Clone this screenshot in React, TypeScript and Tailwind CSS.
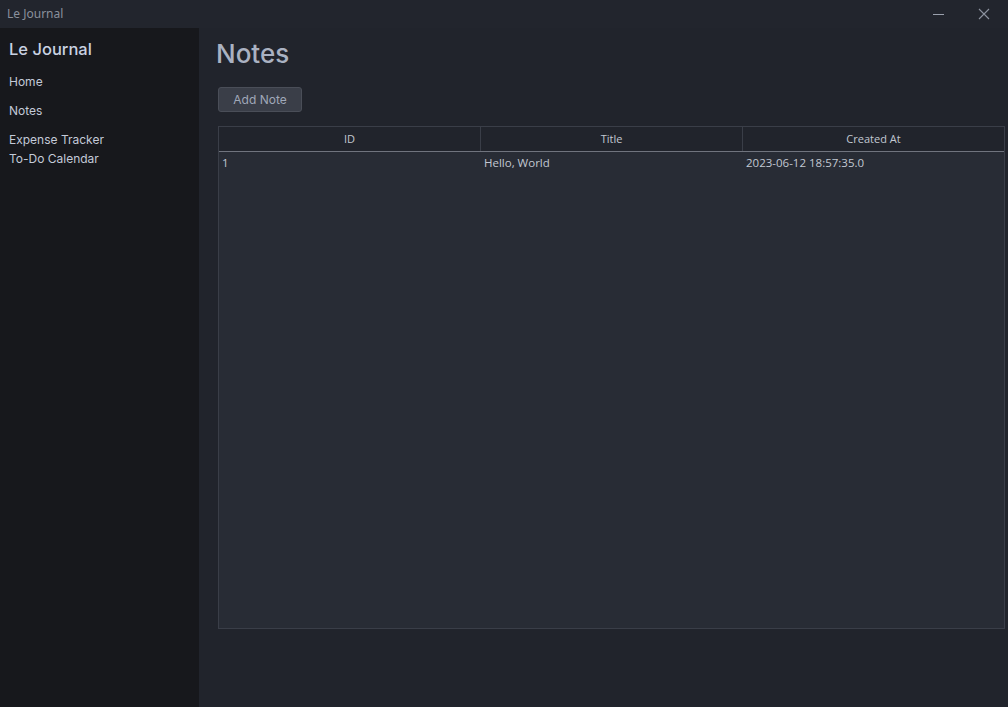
import React from "react";

export default function App() {
  return (
    <div className="w-[1008px] h-[707px] flex flex-col bg-[#21242c] overflow-hidden" style={{ fontFamily: "'Open Sans', 'Noto Sans', sans-serif" }}>
      <div className="h-[28px] flex items-center justify-between bg-[#22252d] shrink-0">
        <span className="pl-[7px] text-[12px] text-[#8a909c]" style={{ fontFamily: "'Noto Sans', sans-serif" }}>Le Journal</span>
        <div className="flex items-center h-full">
          <div className="w-[46px] h-full flex items-center justify-center">
            <div className="w-[11px] h-px bg-[#9aa0ac]" />
          </div>
          <div className="w-[46px] h-full flex items-center justify-center mr-[1px]">
            <svg width="12" height="12" viewBox="0 0 12 12">
              <path d="M1 1 L11 11 M11 1 L1 11" stroke="#8d93a0" strokeWidth="1.1" />
            </svg>
          </div>
        </div>
      </div>
      <div className="flex flex-1 min-h-0">
        <aside className="w-[199px] bg-[#17181c] shrink-0 pl-[9px] pt-[10px]" style={{ fontFamily: "Inter, 'Noto Sans', sans-serif" }}>
          <div className="text-[16.5px] font-medium text-[#c9d2e2] leading-[22px]">Le Journal</div>
          <div className="mt-[12px] text-[12px] text-[#c3cad8] leading-[19px]">Home</div>
          <div className="mt-[10px] text-[12px] text-[#c3cad8] leading-[19px]">Notes</div>
          <div className="mt-[10px] text-[12px] text-[#c3cad8] leading-[19px]">Expense Tracker</div>
          <div className="text-[12px] text-[#c3cad8] leading-[19px]">To-Do Calendar</div>
        </aside>
        <main className="flex-1 pl-[17px] pr-[3px] pt-[10px]">
          <h1 className="text-[26px] font-medium text-[#aab2c2] leading-[32px]" style={{ fontFamily: "Inter, 'Noto Sans', sans-serif" }}>Notes</h1>
          <button className="mt-[17px] ml-[2px] w-[84px] h-[25px] bg-[#3a3e48] border border-[#4a4e58] rounded-[3px] text-[12px] text-[#a0a8b8] flex items-center justify-center" style={{ fontFamily: "Inter, 'Noto Sans', sans-serif" }}>Add Note</button>
          <div className="mt-[14px] ml-[2px] w-[787px] h-[503px] border border-[#3a3e48] bg-[#282c35] flex flex-col text-[11px]">
            <div className="h-[25px] grid grid-cols-[262px_262px_1fr] bg-[#21242c] border-b border-[#70747e] text-[#c2c8d2]">
              <div className="flex items-center justify-center border-r border-[#3a3e48] pt-[1px]">ID</div>
              <div className="flex items-center justify-center border-r border-[#3a3e48] pt-[1px]">Title</div>
              <div className="flex items-center justify-center pt-[1px]">Created At</div>
            </div>
            <div className="h-[22px] grid grid-cols-[262px_262px_1fr] text-[#c2c8d2] text-[11.5px]">
              <div className="pl-[3px] flex items-center">1</div>
              <div className="pl-[3px] flex items-center">Hello, World</div>
              <div className="pl-[3px] flex items-center">2023-06-12 18:57:35.0</div>
            </div>
          </div>
        </main>
      </div>
    </div>
  );
}
